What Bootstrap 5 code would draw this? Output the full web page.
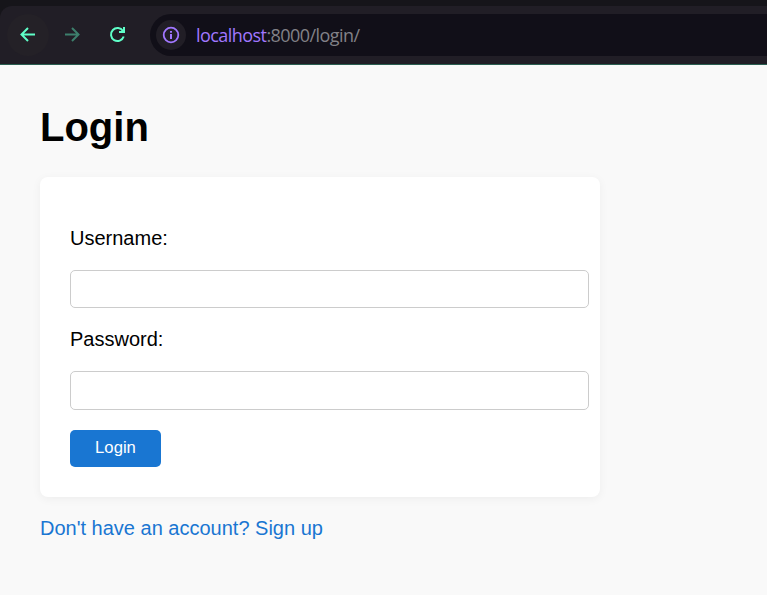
<!DOCTYPE html>
<html lang="en">
<head>
<meta charset="utf-8">
<meta name="viewport" content="width=device-width, initial-scale=1">
<title>Login</title>
<link href="https://cdn.jsdelivr.net/npm/bootstrap@5.3.0/dist/css/bootstrap.min.css" rel="stylesheet">
<style>
body{background:#f9f9f9;color:#000;font:20px/23px "Liberation Sans",Arial,sans-serif;height:595px;overflow:hidden}
.browser-top{background:#16151a;height:65px;padding-top:6px;border-bottom:1px solid #2a5e50}
.toolbar{background:#211e26;height:58px;border-top-left-radius:12px;padding-left:7px}
.tool{width:42px;height:42px;margin-right:3px;color:#5fffc8;background:none;border:0;padding:0}
.tool-back{background:#242127}
.tool-forward{color:#3d7f6c}
.address{background:#110f18;height:42px;margin-left:8px;border-radius:21px 0 0 21px;padding-left:6px}
.site-info{width:30px;height:30px;background:#211e26;color:#a177ff}
.url{font:18px/24px "Open Sans","Noto Sans",sans-serif;color:#828187;margin-left:10px;letter-spacing:-.56px;white-space:nowrap}
.url span{color:#a177ff}
main{padding:39px 40px 0}
h1{font-size:40px;font-weight:700;line-height:46px;margin:0 0 27px}
.login-card{width:560px;height:320px;border:0;border-radius:8px;padding:50px 11px 30px 30px;box-shadow:0 2px 10px rgba(0,0,0,.05);background:#fff}
.login-card label{line-height:23px;margin-bottom:20px}
.login-card .form-control{height:38px;flex-shrink:0;border:1px solid #ccc;border-radius:5px;margin-bottom:20px;background:#fff}
.login-card .form-control.password{height:39px}
.login-card .btn{width:91px;height:37px;background:#1976d2;border:0;border-radius:5px;color:#fff;font-size:16.67px;line-height:19px;padding:0 0 2px}
.signup{color:#1976d2;margin-top:20px;display:inline-block}
</style>
</head>
<body>
<header class="browser-top">
  <div class="toolbar d-flex align-items-center">
    <button class="tool tool-back rounded-circle d-flex align-items-center justify-content-center" aria-label="Back">
      <svg width="18" height="18" viewBox="0 0 18 18" fill="none" stroke="currentColor" stroke-width="2"><path d="M16 8.5H2.5M9 2 2.5 8.5 9 15"/></svg>
    </button>
    <button class="tool tool-forward d-flex align-items-center justify-content-center" aria-label="Forward">
      <svg width="18" height="18" viewBox="0 0 18 18" fill="none" stroke="currentColor" stroke-width="2"><path d="M1 8.5h13.5M8 2l6.5 6.5L8 15"/></svg>
    </button>
    <button class="tool d-flex align-items-center justify-content-center" aria-label="Reload">
      <svg width="18" height="18" viewBox="0 0 18 18" fill="none" stroke="currentColor" stroke-width="2"><path d="M14 5A6.5 6.5 0 1 0 14.7 10.5"/><path fill="currentColor" stroke="none" d="M16 1v6h-6V5h2.6L14 3.6V1z"/></svg>
    </button>
    <div class="address d-flex align-items-center flex-grow-1">
      <div class="site-info rounded-circle d-flex align-items-center justify-content-center">
        <svg width="18" height="18" viewBox="0 0 18 18" fill="none" stroke="currentColor"><circle cx="9" cy="9" r="7.3" stroke-width="1.8"/><path d="M9 8v5M9 5v1.8" stroke-width="2"/></svg>
      </div>
      <div class="url"><span>localhost</span>:8000/login/</div>
    </div>
  </div>
</header>
<main>
  <h1>Login</h1>
  <form class="login-card card align-items-start">
    <label for="username">Username:</label>
    <input class="form-control" id="username" type="text">
    <label for="password">Password:</label>
    <input class="form-control password" id="password" type="password">
    <button class="btn" type="button">Login</button>
  </form>
  <a class="signup text-decoration-none" href="#">Don't have an account? Sign up</a>
</main>
<script src="https://cdn.jsdelivr.net/npm/bootstrap@5.3.0/dist/js/bootstrap.bundle.min.js"></script>
</body>
</html>
